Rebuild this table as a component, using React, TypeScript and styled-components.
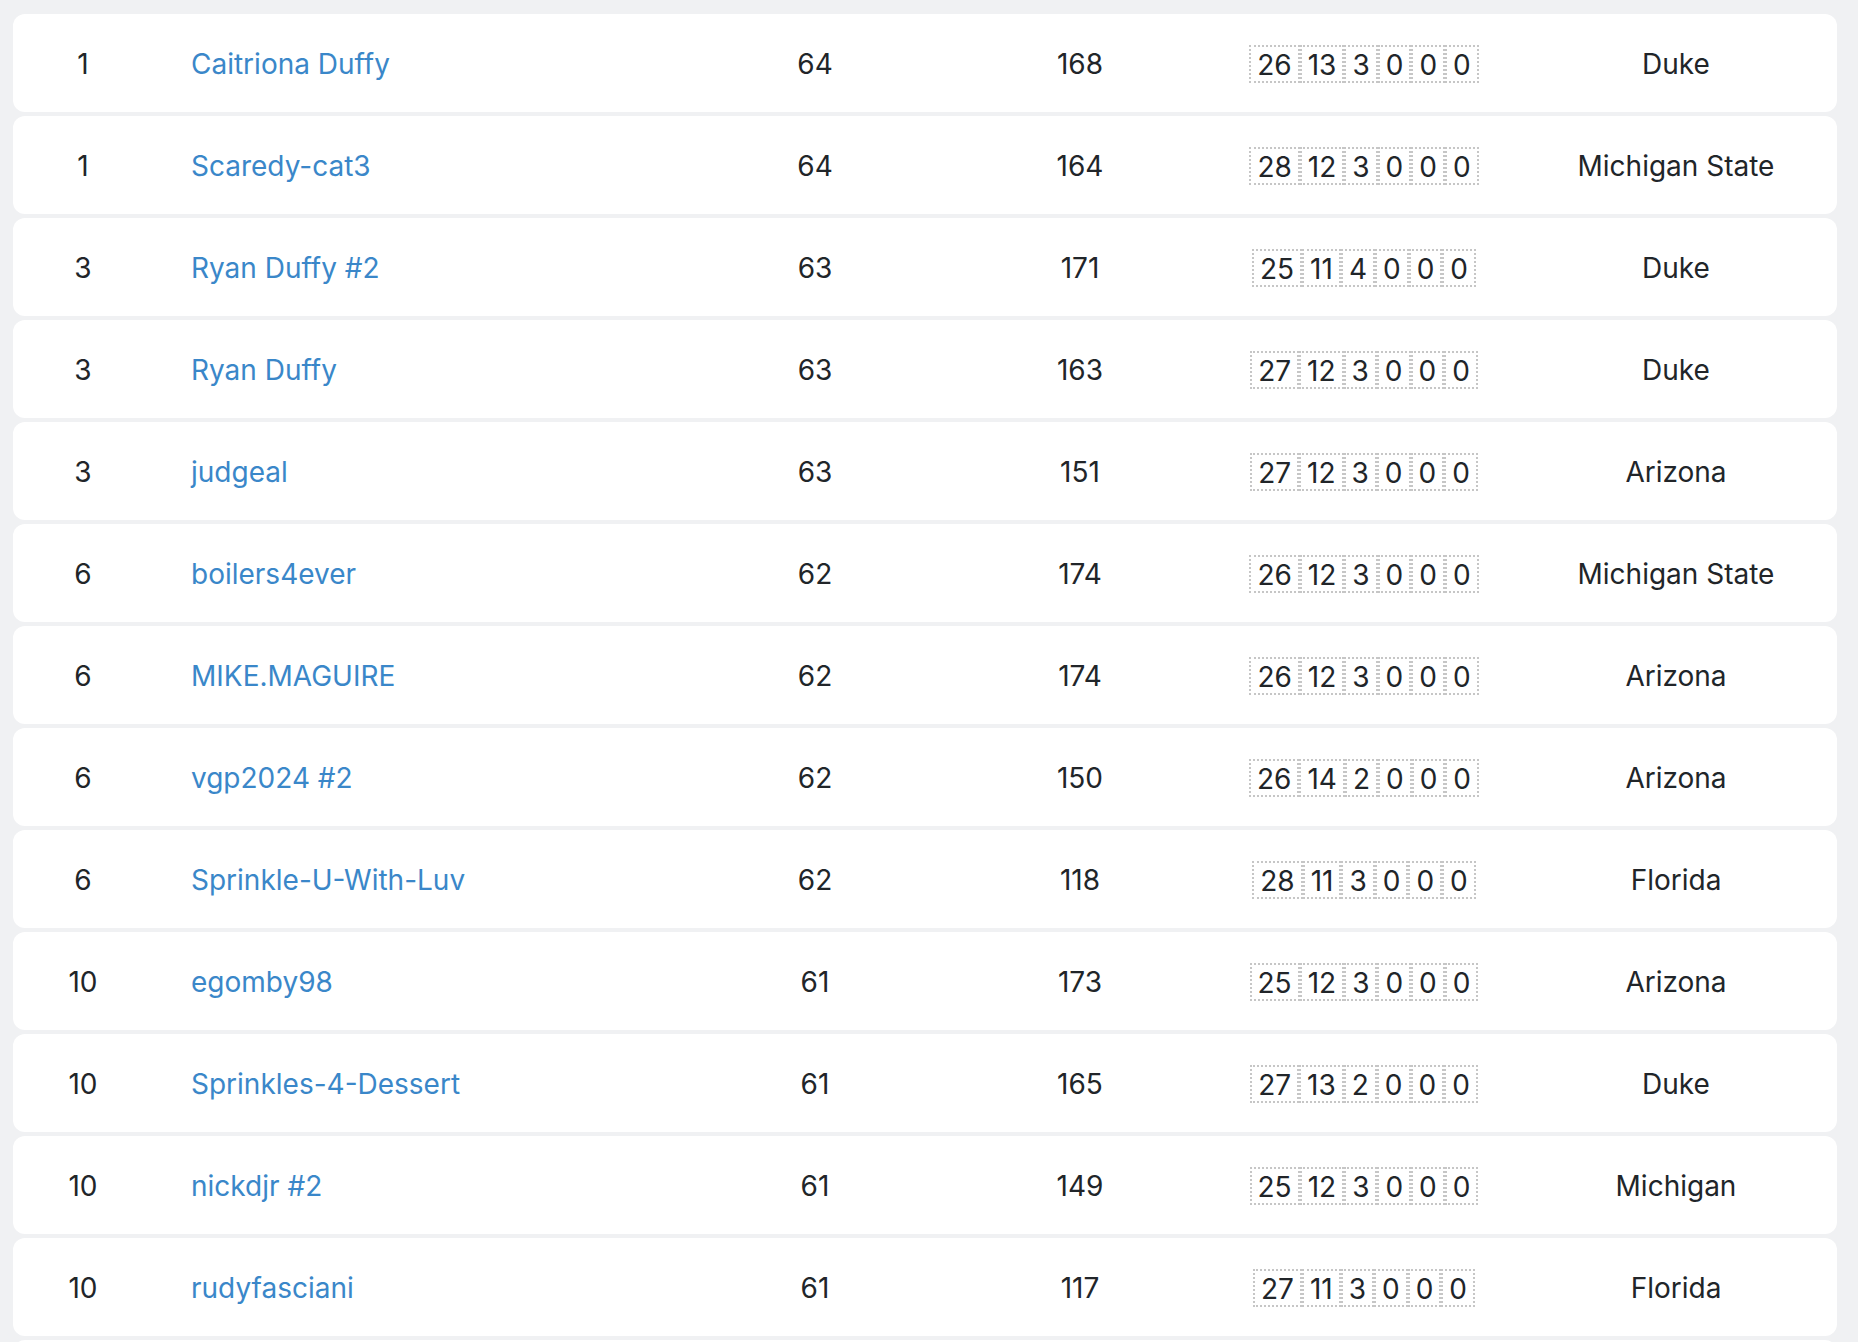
import styled, { createGlobalStyle } from "styled-components";

const GlobalStyle = createGlobalStyle`
  html, body {
    margin: 0;
    padding: 0;
    background-color: #f0f1f3;
  }
  body {
    font-family: Inter, "Noto Sans", "Liberation Sans", sans-serif;
    color: #212529;
  }
`;

const Page = styled.div`
  padding: 14px 21px 0 13px;
  height: 1342px;
  overflow: hidden;
  box-sizing: border-box;
`;

const List = styled.div`
  display: flex;
  flex-direction: column;
  gap: 4px;
`;

const Row = styled.div`
  display: grid;
  grid-template-columns: 140px 530px 264px 266px 302px 322px;
  align-items: center;
  height: 98px;
  box-sizing: border-box;
  padding-top: 2px;
  background-color: #ffffff;
  border-radius: 12px;
  font-size: 28px;
  line-height: 34px;
`;

const Cell = styled.div<{ $align?: "left" | "center" }>`
  text-align: ${({ $align }) => $align ?? "center"};
  white-space: nowrap;
`;

const NameCell = styled(Cell)`
  padding-left: 38px;
`;

const PlayerLink = styled.a`
  color: #3a87c9;
  text-decoration: none;
  cursor: pointer;
`;

const Picks = styled.div`
  display: flex;
  justify-content: center;
  margin-top: -1px;
`;

const Pick = styled.span`
  display: inline-block;
  height: 38px;
  box-sizing: border-box;
  padding: 0 6px;
  border: 2px dotted #c6c6c6;
  line-height: 36px;
`;

type Entry = {
  rank: number;
  name: string;
  points: number;
  total: number;
  picks: number[];
  team: string;
};

const entries: Entry[] = [
  { rank: 1, name: "Caitriona Duffy", points: 64, total: 168, picks: [26, 13, 3, 0, 0, 0], team: "Duke" },
  { rank: 1, name: "Scaredy-cat3", points: 64, total: 164, picks: [28, 12, 3, 0, 0, 0], team: "Michigan State" },
  { rank: 3, name: "Ryan Duffy #2", points: 63, total: 171, picks: [25, 11, 4, 0, 0, 0], team: "Duke" },
  { rank: 3, name: "Ryan Duffy", points: 63, total: 163, picks: [27, 12, 3, 0, 0, 0], team: "Duke" },
  { rank: 3, name: "judgeal", points: 63, total: 151, picks: [27, 12, 3, 0, 0, 0], team: "Arizona" },
  { rank: 6, name: "boilers4ever", points: 62, total: 174, picks: [26, 12, 3, 0, 0, 0], team: "Michigan State" },
  { rank: 6, name: "MIKE.MAGUIRE", points: 62, total: 174, picks: [26, 12, 3, 0, 0, 0], team: "Arizona" },
  { rank: 6, name: "vgp2024 #2", points: 62, total: 150, picks: [26, 14, 2, 0, 0, 0], team: "Arizona" },
  { rank: 6, name: "Sprinkle-U-With-Luv", points: 62, total: 118, picks: [28, 11, 3, 0, 0, 0], team: "Florida" },
  { rank: 10, name: "egomby98", points: 61, total: 173, picks: [25, 12, 3, 0, 0, 0], team: "Arizona" },
  { rank: 10, name: "Sprinkles-4-Dessert", points: 61, total: 165, picks: [27, 13, 2, 0, 0, 0], team: "Duke" },
  { rank: 10, name: "nickdjr #2", points: 61, total: 149, picks: [25, 12, 3, 0, 0, 0], team: "Michigan" },
  { rank: 10, name: "rudyfasciani", points: 61, total: 117, picks: [27, 11, 3, 0, 0, 0], team: "Florida" },
];

function App() {
  return (
    <>
      <GlobalStyle />
      <Page>
        <List>
          {entries.map((e, i) => (
            <Row key={i}>
              <Cell>{e.rank}</Cell>
              <NameCell $align="left">
                <PlayerLink>{e.name}</PlayerLink>
              </NameCell>
              <Cell>{e.points}</Cell>
              <Cell>{e.total}</Cell>
              <Picks>
                {e.picks.map((p, j) => (
                  <Pick key={j}>{p}</Pick>
                ))}
              </Picks>
              <Cell>{e.team}</Cell>
            </Row>
          ))}
          {/* next row starts just below the fold */}
          <Row />
        </List>
      </Page>
    </>
  );
}

export default App;
